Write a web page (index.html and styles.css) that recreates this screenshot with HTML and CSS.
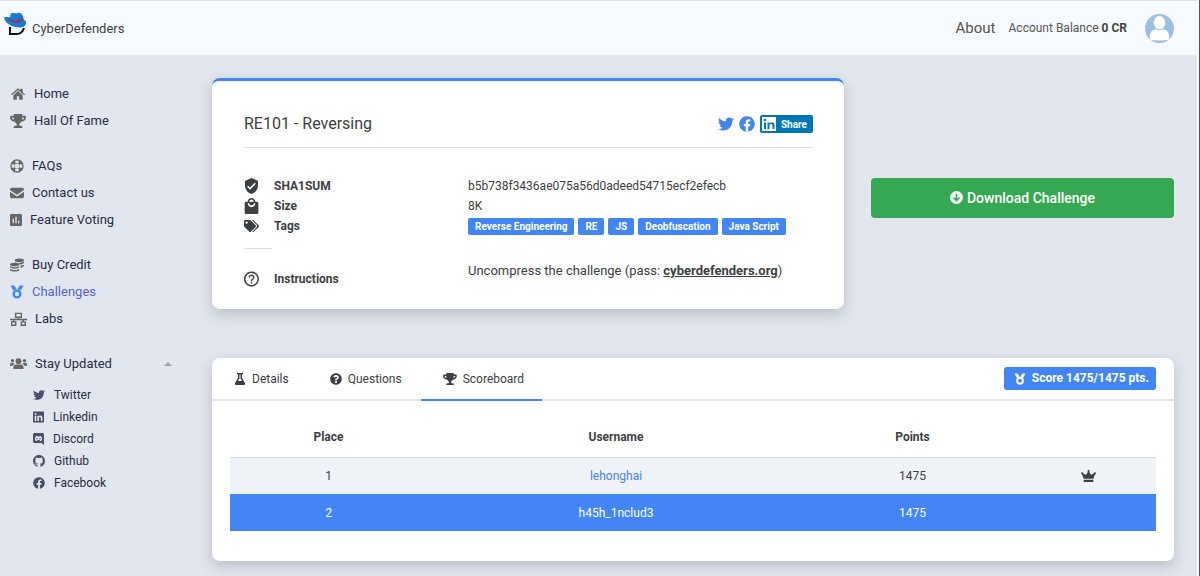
FILE: index.html
```
<!DOCTYPE html>
<html lang="en">
<head>
  <meta charset="UTF-8">
  <meta name="viewport" content="width=device-width, initial-scale=1">
  <title>RE101 - Reversing | CyberDefenders</title>
  <link rel="stylesheet" href="styles.css">
</head>
<body>

  <!-- shared icons -->
  <svg class="sprite" aria-hidden="true">
    <symbol id="i-trophy" viewBox="0 0 576 512"><path d="M552 64H448V24c0-13.3-10.7-24-24-24H152c-13.3 0-24 10.7-24 24v40H24C10.7 64 0 74.7 0 88v56c0 35.7 22.5 72.4 61.9 100.7 31.5 22.7 69.8 37.1 110 41.7C203.3 338.5 240 360 240 360v72h-48c-35.3 0-64 20.7-64 56v12c0 6.6 5.4 12 12 12h296c6.600 0 12-5.400 12-12v-12c0-35.300-28.700-56-64-56h-48v-72s36.700-21.500 68.100-73.600c40.300-4.600 78.600-19 110-41.700 39.300-28.300 61.900-65 61.900-100.700V88c0-13.300-10.700-24-24-24zM99.300 192.800C74.900 175.200 64 155.600 64 144v-16h64.200c1 32.600 5.800 61.200 12.800 86.200-15.100-5.200-29.200-12.400-41.700-21.400zM512 144c0 16.100-17.700 36.100-35.300 48.800-12.500 9-26.700 16.200-41.800 21.400 7-25 11.800-53.600 12.800-86.200H512v16z"/></symbol>
    <symbol id="i-twitter" viewBox="0 0 512 512"><path d="M459.37 151.716c.325 4.548.325 9.097.325 13.645 0 138.72-105.583 298.558-298.558 298.558-59.452 0-114.68-17.219-161.137-47.106 8.447.974 16.568 1.299 25.34 1.299 49.055 0 94.213-16.568 130.274-44.832-46.132-.975-84.792-31.188-98.112-72.772 6.498.974 12.995 1.624 19.818 1.624 9.421 0 18.843-1.3 27.614-3.573-48.081-9.747-84.143-51.98-84.143-102.985v-1.299c13.969 7.797 30.214 12.67 47.431 13.319-28.264-18.843-46.781-51.005-46.781-87.391 0-19.492 5.197-37.36 14.294-52.954 51.655 63.675 129.3 105.258 216.365 109.807-1.624-7.797-2.599-15.918-2.599-24.04 0-57.828 46.782-104.934 104.934-104.934 30.213 0 57.502 12.67 76.67 33.137 23.715-4.548 46.456-13.32 66.599-25.34-7.798 24.366-24.366 44.833-46.132 57.827 21.117-2.273 41.584-8.122 60.426-16.243-14.292 20.791-32.161 39.308-52.628 54.253z"/></symbol>
    <symbol id="i-facebook" viewBox="0 0 512 512"><path d="M504 256C504 119 393 8 256 8S8 119 8 256c0 123.78 90.69 226.38 209.25 245V327.69h-63V256h63v-54.64c0-62.15 37-96.48 93.67-96.48 27.14 0 55.52 4.84 55.52 4.84v61h-31.28c-30.8 0-40.41 19.12-40.41 38.73V256h68.78l-11 71.69h-57.78V501C413.31 482.38 504 379.78 504 256z"/></symbol>
    <symbol id="i-medal" viewBox="0 0 24 24"><path d="M1 1h6l4 5.500-4.500 3.500L4 7zM23 1h-6l-4 5.500L17.500 10 20 7z"/><circle cx="12" cy="15.500" r="5.800" fill="none" stroke="currentColor" stroke-width="4"/></symbol>
  </svg>

  <header class="topbar">
    <a class="brand" href="#">
      <svg class="logo" viewBox="0 0 24 26" aria-hidden="true">
        <path d="M6 15v7h7c4 0 6-3 7-6" fill="none" stroke="#111" stroke-width="2"/>
        <path d="M0 6c1-2 4 0 6-1 1-2 0-4 3-4 2 0 3 1 5 0s4 1 5 3l1 4c3 0 3 5-1 7-7 2-17-2-19-9z" fill="#1a78d6"/>
        <path d="M5 6c5 4 9 3 13 0l1 2c-4 4-10 3-14 0z" fill="#a33052"/>
      </svg>
      <span>CyberDefenders</span>
    </a>
    <nav class="topnav">
      <a class="about" href="#">About</a>
      <span class="balance">Account Balance <b>0 CR</b></span>
      <a class="avatar" href="#" aria-label="Profile">
        <svg viewBox="0 0 30 30" aria-hidden="true">
          <circle cx="15" cy="15" r="15" fill="#9bbfe3"/>
          <ellipse cx="15" cy="9" rx="6" ry="7" fill="#fff"/>
          <path d="M5 26c0-8 2-10 7-10 2 1 4 1 6 0 5 0 7 2 7 10-5 2-15 2-20 0z" fill="#fff"/>
        </svg>
      </a>
    </nav>
  </header>

  <div class="layout">
    <aside class="sidebar">
      <ul class="menu">
        <li><a href="#"><svg class="w16" viewBox="0 0 24 24"><path d="M12 7l8 7v8h-6v-6h-4v6H4v-8zM12 2l4 3.500V3h4v6l4 3.500-1.300 1.500L12 5 1.300 14 0 12.500z"/></svg>Home</a></li>
        <li><a href="#"><svg class="w16"><use href="#i-trophy"/></svg>Hall Of Fame</a></li>
      </ul>
      <ul class="menu">
        <li><a href="#"><svg class="w14" viewBox="0 0 24 24"><circle cx="12" cy="12" r="8" fill="none" stroke="currentColor" stroke-width="7"/><path d="M12 3v4M12 17v4M3 12h4M17 12h4" stroke="#e2e6ee" stroke-width="6"/></svg>FAQs</a></li>
        <li><a href="#"><svg class="w14" viewBox="0 0 24 24"><path d="M2 3h20l2 2v2l-12 8L0 7V5zM0 10l12 8 12-8v9l-2 2H2l-2-2z"/></svg>Contact us</a></li>
        <li><a href="#"><svg class="w12" viewBox="3 3 18 18"><path d="M19 3H5c-1.100 0-2 .9-2 2v14c0 1.100.9 2 2 2h14c1.100 0 2-.9 2-2V5c0-1.100-.9-2-2-2zM9 17H7v-7h2v7zm4 0h-2V7h2v10zm4 0h-2v-4h2v4z"/></svg>Feature Voting</a></li>
      </ul>
      <ul class="menu">
        <li><a href="#"><svg class="w14" viewBox="0 0 24 24"><ellipse cx="16" cy="4" rx="8" ry="3"/><ellipse cx="8" cy="11" rx="8" ry="3"/><path d="M8 7c3 2 12 2 16-1v2c-1 2-4 3-7 3-1-2-4-3-8-3zM18 13c3 0 5-1 6-2v2c0 2-3 3-6 4zM0 13.500c4 3 12 3 16 0v2.500c-2 3-14 3-16 0zM0 18.500c4 3 12 3 16 0V21c-2 3-14 3-16 0z"/></svg>Buy Credit</a></li>
        <li><a class="active" href="#"><svg class="w14"><use href="#i-medal"/></svg>Challenges</a></li>
        <li><a href="#"><svg class="w17" viewBox="0 0 30 24"><path d="M10 2h10v7H10zM3 17h7v6H3zM20 17h7v6h-7zM15 9v4M0 13h30M6.500 13v4M23.500 13v4" fill="none" stroke="currentColor" stroke-width="2.500"/></svg>Labs</a></li>
      </ul>
      <div class="updates">
        <button class="toggle" type="button" aria-expanded="true">
          <svg class="w17" viewBox="0 0 30 24"><circle cx="15" cy="7" r="5"/><circle cx="4.500" cy="6" r="3"/><circle cx="25.500" cy="6" r="3"/><path d="M6 21v-3c0-3 2-5 5-5h8c3 0 5 2 5 5v3zM0 15v-2c0-2 1-3 3-3h3l2 2c-2 1-3 2-3 3zM30 15v-2c0-2-1-3-3-3h-3l-2 2c2 1 3 2 3 3z"/></svg>
          Stay Updated
          <span class="caret"></span>
        </button>
        <ul class="social">
          <li><a href="#"><svg class="w12"><use href="#i-twitter"/></svg>Twitter</a></li>
          <li><a href="#"><svg class="w11" viewBox="0 32 448 448"><path d="M416 32H31.900C14.300 32 0 46.500 0 64.300v383.400C0 465.500 14.300 480 31.900 480H416c17.600 0 32-14.500 32-32.300V64.300c0-17.800-14.400-32.300-32-32.300zM135.400 416H69V202.200h66.500V416zm-33.200-243c-21.300 0-38.500-17.300-38.500-38.500S80.900 96 102.200 96c21.200 0 38.500 17.300 38.500 38.500 0 21.300-17.200 38.500-38.500 38.500zm282.100 243h-66.400V312c0-24.800-.5-56.700-34.500-56.700-34.600 0-39.900 27-39.900 54.900V416h-66.400V202.200h63.700v29.200h.9c8.900-16.800 30.600-34.500 62.900-34.500 67.200 0 79.700 44.300 79.700 101.900V416z"/></svg>Linkedin</a></li>
          <li><a href="#"><svg class="w11" viewBox="0 0 22 24"><path fill-rule="evenodd" d="M2 0h18l2 2v22l-5-4H2l-2-2V2zM7 6c-2 1-3 2-3 8 1 1 2 2 4 2l1-2h4l1 2c2 0 3-1 4-2 0-6-1-7-3-8-1 0-2 0-2 1H9c0-1-1-1-2-1zm1 4a1.500 1.500 0 1 0 0 3 1.500 1.500 0 0 0 0-3zm6 0a1.500 1.500 0 1 0 0 3 1.500 1.500 0 0 0 0-3z"/></svg>Discord</a></li>
          <li><a href="#"><svg class="w12" viewBox="0 0 16 16"><path d="M8 0C3.580 0 0 3.580 0 8c0 3.540 2.290 6.530 5.470 7.590.4.070.55-.170.55-.38 0-.190-.010-.820-.010-1.490-2.010.370-2.530-.490-2.690-.940-.090-.230-.480-.940-.820-1.130-.280-.150-.680-.520-.010-.530.630-.010 1.080.580 1.230.820.720 1.210 1.870.870 2.330.660.070-.520.280-.870.510-1.070-1.780-.200-3.640-.890-3.640-3.950 0-.870.310-1.590.820-2.150-.080-.200-.360-1.020.080-2.120 0 0 .670-.210 2.200.820.640-.180 1.320-.270 2-.270.680 0 1.360.090 2 .270 1.530-1.040 2.200-.820 2.200-.820.440 1.100.160 1.920.080 2.120.510.560.820 1.270.820 2.150 0 3.070-1.870 3.750-3.650 3.950.290.250.540.730.540 1.480 0 1.070-.010 1.930-.010 2.200 0 .210.150.460.550.380A8.013 8.013 0 0 0 16 8c0-4.420-3.580-8-8-8z"/></svg>Github</a></li>
          <li><a href="#"><svg class="w12"><use href="#i-facebook"/></svg>Facebook</a></li>
        </ul>
      </div>
    </aside>

    <main class="content">
      <div class="overview">
        <section class="card challenge">
          <div class="challenge-head">
            <h1>RE101 - Reversing</h1>
            <div class="share">
              <a href="#" aria-label="Share on Twitter"><svg><use href="#i-twitter"/></svg></a>
              <a href="#" aria-label="Share on Facebook"><svg><use href="#i-facebook"/></svg></a>
              <button class="in-share" type="button">
                <svg viewBox="0 0 14 14" aria-hidden="true"><path d="M0 0h14v14H0z" fill="#fff"/><circle cx="3" cy="3" r="1.300"/><path d="M2 5.500h2V12H2zM5.500 5.500h2v1c1.500-2 5-1.500 5 1.500v4h-2V8.500c0-2-3-2-3 0V12h-2z"/></svg>
                Share
              </button>
            </div>
          </div>
          <dl class="facts">
            <dt><svg viewBox="3 1 18 22"><path d="M12 1L3 5v6c0 5.550 3.840 10.740 9 12 5.160-1.260 9-6.450 9-12V5l-9-4zm-2 16l-4-4 1.410-1.410L10 14.170l6.590-6.590L18 9l-8 8z"/></svg>SHA1SUM</dt>
            <dd>b5b738f3436ae075a56d0adeed54715ecf2efecb</dd>
            <dt><svg viewBox="3 1 18 21"><path d="M19 6h-2c0-2.760-2.240-5-5-5S7 3.240 7 6H5c-1.100 0-1.990.9-1.990 2L3 20c0 1.100.9 2 2 2h14c1.100 0 2-.9 2-2V8c0-1.100-.9-2-2-2zm-7-3c1.660 0 3 1.340 3 3H9c0-1.660 1.340-3 3-3zm0 10c-2.760 0-5-2.240-5-5h2c0 1.660 1.340 3 3 3s3-1.340 3-3h2c0 2.760-2.240 5-5 5z"/></svg>Size</dt>
            <dd>8K</dd>
            <dt><svg viewBox="0 0 640 512"><path d="M497.941 225.941L286.059 14.059A48 48 0 0 0 252.118 0H48C21.490 0 0 21.490 0 48v204.118a48 48 0 0 0 14.059 33.941l211.882 211.882c18.744 18.745 49.136 18.746 67.882 0l204.118-204.118c18.745-18.745 18.745-49.137 0-67.882zM112 160c-26.510 0-48-21.490-48-48s21.490-48 48-48 48 21.490 48 48-21.490 48-48 48zm513.941 133.823L421.823 497.941c-18.745 18.745-49.137 18.745-67.882 0l-.36-.36L527.640 323.522c16.999-16.999 26.360-39.600 26.360-63.640s-9.362-46.641-26.360-63.640L331.397 0h48.721a48 48 0 0 1 33.941 14.059l211.882 211.882c18.745 18.745 18.745 49.137 0 67.882z"/></svg>Tags</dt>
            <dd class="tags">
              <span>Reverse Engineering</span>
              <span>RE</span>
              <span>JS</span>
              <span>Deobfuscation</span>
              <span>Java Script</span>
            </dd>
          </dl>
          <hr class="short">
          <dl class="facts">
            <dt class="how"><svg viewBox="2 2 20 20"><path d="M11 18h2v-2h-2v2zm1-16C6.480 2 2 6.480 2 12s4.480 10 10 10 10-4.480 10-10S17.520 2 12 2zm0 18c-4.410 0-8-3.590-8-8s3.590-8 8-8 8 3.590 8 8-3.590 8-8 8zm0-14c-2.210 0-4 1.790-4 4h2c0-1.100.9-2 2-2s2 .9 2 2c0 2-3 1.750-3 5h2c0-2.250 3-2.500 3-5 0-2.210-1.790-4-4-4z"/></svg>Instructions</dt>
            <dd class="note">Uncompress the challenge (pass: <b>cyberdefenders.org</b>)</dd>
          </dl>
        </section>

        <button class="download" type="button">
          <svg viewBox="0 0 24 24" aria-hidden="true"><circle cx="12" cy="12" r="12" fill="#fff"/><path d="M12 5v12M6.500 12l5.500 5.500 5.500-5.500" fill="none" stroke="#34a853" stroke-width="3"/></svg>
          Download Challenge
        </button>
      </div>

      <section class="card results">
        <div class="tabs">
          <button type="button"><svg viewBox="0 0 24 24"><path fill-rule="evenodd" d="M6 0h12v3h-2v7l6 10c1 2 0 4-2 4H4c-2 0-3-2-2-4l6-10V3H6zm5 3v8l-3 5h8l-3-5V3z"/></svg>Details</button>
          <button type="button"><svg viewBox="0 0 512 512"><path d="M504 256c0 136.997-111.043 248-248 248S8 392.997 8 256C8 119.083 119.043 8 256 8s248 111.083 248 248zM262.655 90c-54.497 0-89.255 22.957-116.549 63.758-3.536 5.286-2.353 12.415 2.715 16.258l34.699 26.310c5.205 3.947 12.621 3.008 16.665-2.122 17.864-22.658 30.113-35.797 57.303-35.797 20.429 0 45.698 13.148 45.698 32.958 0 14.976-12.363 22.667-32.534 33.976C247.128 238.528 216 254.941 216 296v4c0 6.627 5.373 12 12 12h56c6.627 0 12-5.373 12-12v-1.333c0-28.462 83.186-29.647 83.186-106.667 0-58.002-60.165-102-116.531-102zM256 338c-25.365 0-46 20.635-46 46 0 25.364 20.635 46 46 46s46-20.636 46-46c0-25.365-20.635-46-46-46z"/></svg>Questions</button>
          <button class="current" type="button"><svg class="wide"><use href="#i-trophy"/></svg>Scoreboard</button>
          <span class="score"><svg><use href="#i-medal"/></svg>Score 1475/1475 pts.</span>
        </div>
        <table class="board">
          <colgroup><col class="c-place"><col class="c-user"><col class="c-points"><col></colgroup>
          <thead>
            <tr><th>Place</th><th>Username</th><th>Points</th><th></th></tr>
          </thead>
          <tbody>
            <tr>
              <td>1</td><td><a href="#">lehonghai</a></td><td>1475</td>
              <td><svg class="crown" viewBox="0 0 28 24"><path d="M5 20h18v4H5zM5 18L2 10a2 2 0 1 1 2-2l5 3 4-6a2 2 0 1 1 2 0l4 6 5-3a2 2 0 1 1 2 2l-3 8z"/></svg></td>
            </tr>
            <tr class="me"><td>2</td><td>h45h_1nclud3</td><td>1475</td><td></td></tr>
          </tbody>
        </table>
      </section>
    </main>
  </div>

</body>
</html>
```

FILE: styles.css
```
* { box-sizing: border-box; }

html {
  background: #f5f7f9;
  border-right: 1px solid #555;
  padding-right: 2px;
}

body {
  margin: 0;
  min-height: 100vh;
  background: #e2e6ee;
  border-top: 1px solid #d9dde6;
  font-family: Roboto, "Liberation Sans", sans-serif;
  font-size: 12px;
  color: #3c4043;
}

a { color: inherit; text-decoration: none; }

button {
  font: inherit;
  color: inherit;
  border: none;
  background: none;
  padding: 0;
  cursor: pointer;
}

ul, dl, dd { margin: 0; padding: 0; list-style: none; }

svg { fill: currentColor; flex: none; }

.sprite { position: absolute; width: 0; height: 0; }

/* top bar */
.topbar {
  display: flex;
  justify-content: space-between;
  align-items: center;
  height: 54px;
  padding: 0 23px 0 4px;
  background: #f7fafd;
}

.brand {
  display: flex;
  align-items: center;
  gap: 4px;
  font-size: 13px;
}

.logo { width: 24px; height: 26px; margin-bottom: 6px; }

.topnav { display: flex; align-items: center; color: #555; }
.about { font-size: 15px; margin-right: 13px; }
.balance { margin-right: 18px; }
.balance b { color: #444; }
.avatar svg { display: block; width: 29px; height: 29px; }

/* sidebar */
.layout { display: flex; }

.sidebar {
  flex: none;
  width: 212px;
  padding: 25px 40px 0 10px;
  font-size: 13px;
  color: #2a2d45;
}

.menu { margin-bottom: 18px; }

.menu a, .toggle {
  display: flex;
  align-items: center;
  gap: 8px;
  height: 27px;
}

.menu svg, .toggle svg { height: 14px; color: #666; }
.menu .active { color: #5564cc; }
.menu .active svg { color: #4285f4; }

.w17 { width: 17px; }
.w16 { width: 16px; }
.w14 { width: 14px; }
.w12 { width: 12px; }
.w11 { width: 11px; }

.toggle { width: 100%; }

.caret {
  margin-left: auto;
  border: 4px solid transparent;
  border-top: none;
  border-bottom-color: #a0a4ad;
}

.social { padding: 7px 0 0 23px; font-size: 12px; }

.social a {
  display: flex;
  align-items: center;
  gap: 9px;
  line-height: 22px;
}

.social svg { height: 12px; color: #4b4f68; }

/* challenge */
.content { flex: 1; padding: 23px 23px 15px 0; }

.overview {
  display: grid;
  grid-template-columns: 632fr 303fr;
  gap: 27px;
  align-items: center;
  margin-bottom: 49px;
}

.card {
  background: #fff;
  border-radius: 8px;
  box-shadow: 0 5px 14px rgba(60, 70, 80, .25);
}

.challenge {
  border-top: 3px solid #4285f4;
  padding: 31px 31px 20px 32px;
}

.challenge-head {
  display: flex;
  justify-content: space-between;
  align-items: center;
  padding-bottom: 11px;
  margin-bottom: 28px;
  border-bottom: 1px solid #e2e2e2;
}

h1 { margin: 0; font-size: 16px; font-weight: 400; line-height: 24px; }

.share { display: flex; align-items: center; gap: 5px; color: #4285f4; }
.share svg { display: block; width: 16px; height: 16px; }

.challenge .in-share {
  display: flex;
  align-items: center;
  gap: 5px;
  height: 18px;
  padding: 0 6px 0 2px;
  border-radius: 2px;
  background: #0077b5;
  color: #fff;
  font-size: 10px;
  font-weight: 700;
}

.in-share svg { width: 14px; height: 14px; fill: #0077b5; }

.facts {
  display: grid;
  grid-template-columns: 224px 1fr;
  line-height: 20px;
}

.facts dt {
  display: flex;
  align-items: center;
  gap: 15px;
  font-weight: 700;
}

.facts svg { width: 15px; height: 16px; }

.tags { display: flex; align-items: center; flex-wrap: wrap; gap: 4px; }

.tags span {
  padding: 0 7px;
  border-radius: 2px;
  background: #4285f4;
  color: #fff;
  font-size: 10px;
  font-weight: 700;
  line-height: 17px;
}

.short { width: 28px; margin: 12px 0; border: none; border-top: 1px solid #ddd; }

.facts .how { padding-top: 8px; }
.note { font-size: 13px; }
.note b { text-decoration: underline; }

.download {
  display: flex;
  justify-content: center;
  align-items: center;
  gap: 4px;
  height: 40px;
  margin-top: 8px;
  border-radius: 4px;
  background: #34a853;
  color: #fff;
  font-size: 14px;
  font-weight: 500;
}

.download svg { width: 13px; height: 13px; }

/* scoreboard */
.tabs {
  display: flex;
  align-items: center;
  height: 43px;
  padding-right: 18px;
  border-bottom: 2px solid #e3e5e9;
}

/* the underline of a tab covers the border of the bar */
.tabs button {
  display: flex;
  align-items: center;
  align-self: stretch;
  gap: 6px;
  padding: 0 18px 0 22px;
  margin: 0 1px -2px 0;
  border-bottom: 2px solid transparent;
}

.tabs .current { border-bottom-color: #4285f4; }
.tabs svg { width: 12px; height: 12px; }
.tabs .wide { width: 14px; }

.score {
  display: flex;
  align-items: center;
  gap: 6px;
  margin-left: auto;
  padding: 0 7px 0 10px;
  border-radius: 3px;
  background: #4285f4;
  color: #fff;
  font-weight: 700;
  line-height: 23px;
}

.results { padding-bottom: 30px; }

.board {
  width: calc(100% - 36px);
  margin: 17px 18px 0;
  border-collapse: collapse;
  table-layout: fixed;
  text-align: center;
}

.c-place { width: 197px; }
.c-user { width: 378px; }
.c-points { width: 215px; }

.board th, .board td { height: 37px; padding: 0; }
.board th { height: 39px; }
.board tbody { border-top: 1px solid #d3d8e0; }
.board tbody tr { background: #eff2f7; }
.board tbody .me { background: #4285f4; color: #fff; }
.board a { color: #4285f4; }
.crown { display: block; width: 15px; height: 13px; margin: 0 auto; }
```
